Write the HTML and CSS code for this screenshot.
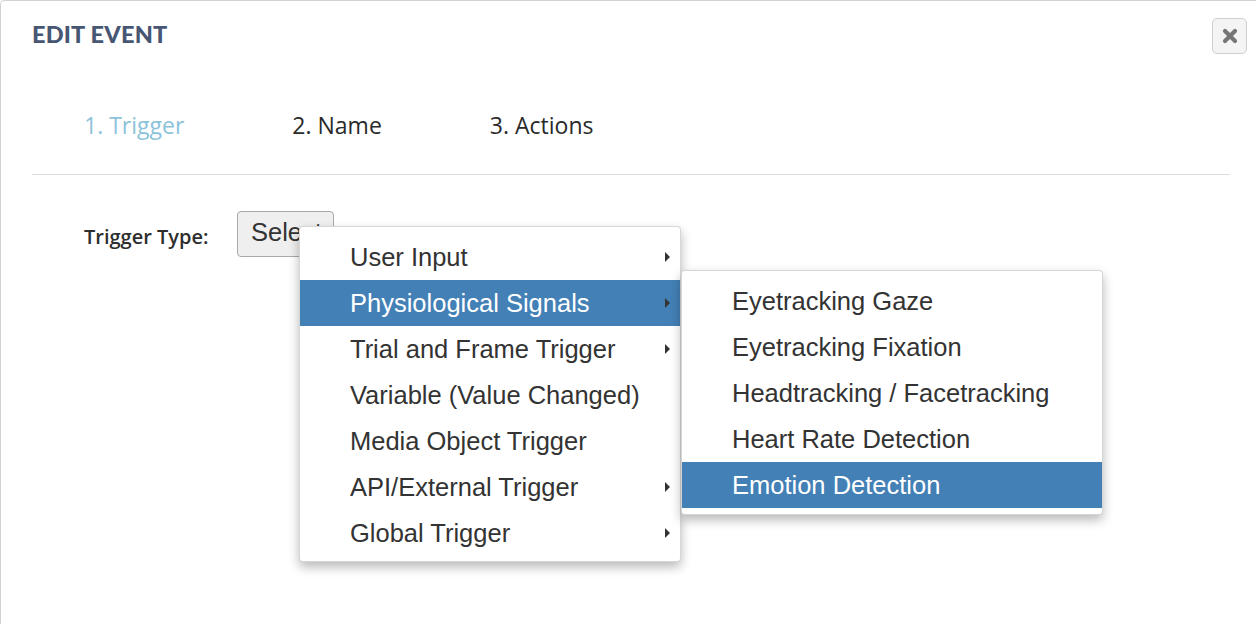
FILE: index.html
```html
<!DOCTYPE html>
<html>
<head>
<meta charset="utf-8">
<link rel="stylesheet" href="styles.css">
</head>
<body>
<div class="modal">
  <div class="modal-header">
    <h1 class="title">EDIT EVENT</h1>
    <button class="close-btn" aria-label="Close">
      <svg width="16" height="16" viewBox="0 0 16 16"><path d="M3 3 L13 13 M13 3 L3 13" stroke="#767676" stroke-width="4.2" stroke-linecap="round"/></svg>
    </button>
  </div>
  <div class="tabs">
    <span class="tab active">1. Trigger</span>
    <span class="tab">2. Name</span>
    <span class="tab">3. Actions</span>
  </div>
  <hr class="divider">
  <div class="form-row">
    <label class="label">Trigger Type:</label>
    <div class="select-wrap">
      <button class="select-btn">Select</button>
      <ul class="menu">
        <li class="item has-sub"><span>User Input</span><i class="caret"></i></li>
        <li class="item has-sub active"><span>Physiological Signals</span><i class="caret"></i>
          <ul class="menu submenu">
            <li class="item"><span>Eyetracking Gaze</span></li>
            <li class="item"><span>Eyetracking Fixation</span></li>
            <li class="item"><span>Headtracking / Facetracking</span></li>
            <li class="item"><span>Heart Rate Detection</span></li>
            <li class="item active"><span>Emotion Detection</span></li>
          </ul>
        </li>
        <li class="item has-sub"><span>Trial and Frame Trigger</span><i class="caret"></i></li>
        <li class="item"><span>Variable (Value Changed)</span></li>
        <li class="item"><span>Media Object Trigger</span></li>
        <li class="item has-sub"><span>API/External Trigger</span><i class="caret"></i></li>
        <li class="item has-sub"><span>Global Trigger</span><i class="caret"></i></li>
      </ul>
    </div>
  </div>
</div>
</body>
</html>
```

FILE: styles.css
```css
* { box-sizing: border-box; }
html, body { margin: 0; padding: 0; background: #fff; }
body { width: 1256px; height: 624px; overflow: hidden; }

.modal {
  height: 640px;
  border: 1px solid #d2d2d2;
  border-right: none;
  border-radius: 5px 0 0 0;
  background: #fff;
}

.modal-header {
  display: flex;
  justify-content: space-between;
  align-items: flex-start;
  padding: 17px 9px 0 31px;
}

.title {
  margin: 0;
  margin-top: 1px;
  font-family: Lato, "Open Sans", sans-serif;
  font-weight: 900;
  font-size: 23.5px;
  line-height: 30px;
  color: #475672;
  letter-spacing: 0.2px;
}

.close-btn {
  width: 35px;
  height: 36px;
  padding: 0;
  border: 1px solid #cfcfcf;
  border-radius: 5px;
  background: #f4f4f4;
  display: flex;
  align-items: center;
  justify-content: center;
}

.tabs {
  display: flex;
  gap: 108px;
  padding-left: 83px;
  margin-top: 56px;
  font-family: "Open Sans", sans-serif;
  font-size: 23px;
  line-height: 30px;
  color: #2a2a2a;
}
.tab.active { color: #8cc3da; }

.divider {
  margin: 34px 26px 0 31px;
  border: none;
  border-top: 1px solid #dcdcdc;
  height: 0;
}

.form-row {
  display: flex;
  align-items: flex-start;
  padding-left: 83px;
  margin-top: 36px;
}

.label {
  font-family: "Open Sans", sans-serif;
  font-weight: 600;
  font-size: 20px;
  line-height: 26px;
  margin-top: 13px;
  color: #2e2e2e;
  width: 153px;
}

.select-wrap { position: relative; }

.select-btn {
  width: 97px;
  height: 46px;
  padding: 0 0 4px 13px;
  text-align: left;
  font-family: "Liberation Sans", Arial, sans-serif;
  font-size: 25.5px;
  color: #333;
  background: #efefef;
  border: 1px solid #a9a9a9;
  border-radius: 4px;
  line-height: 40px;
  overflow: hidden;
  white-space: nowrap;
}

.menu {
  list-style: none;
  margin: 0;
  padding: 7px 0 5px;
  position: absolute;
  left: 62px;
  top: 15px;
  width: 382px;
  background: #fff;
  border: 1px solid rgba(0,0,0,0.16);
  border-radius: 4px;
  box-shadow: 0 5px 11px rgba(0,0,0,0.28);
  font-family: "Liberation Sans", Arial, sans-serif;
  font-size: 25.5px;
  color: #333;
  z-index: 2;
}

.item {
  position: relative;
  display: flex;
  justify-content: space-between;
  align-items: center;
  height: 46px;
  padding: 0 10px 0 50px;
  line-height: 46px;
  white-space: nowrap;
}
.item.active { background: #4380b6; color: #fff; }

.caret {
  width: 0;
  height: 0;
  border-left: 5px solid #333;
  border-top: 5px solid transparent;
  border-bottom: 5px solid transparent;
}

.submenu {
  left: 381px;
  top: -10px;
  width: 422px;
  padding: 7px 0 6px;
  z-index: 3;
}
```
